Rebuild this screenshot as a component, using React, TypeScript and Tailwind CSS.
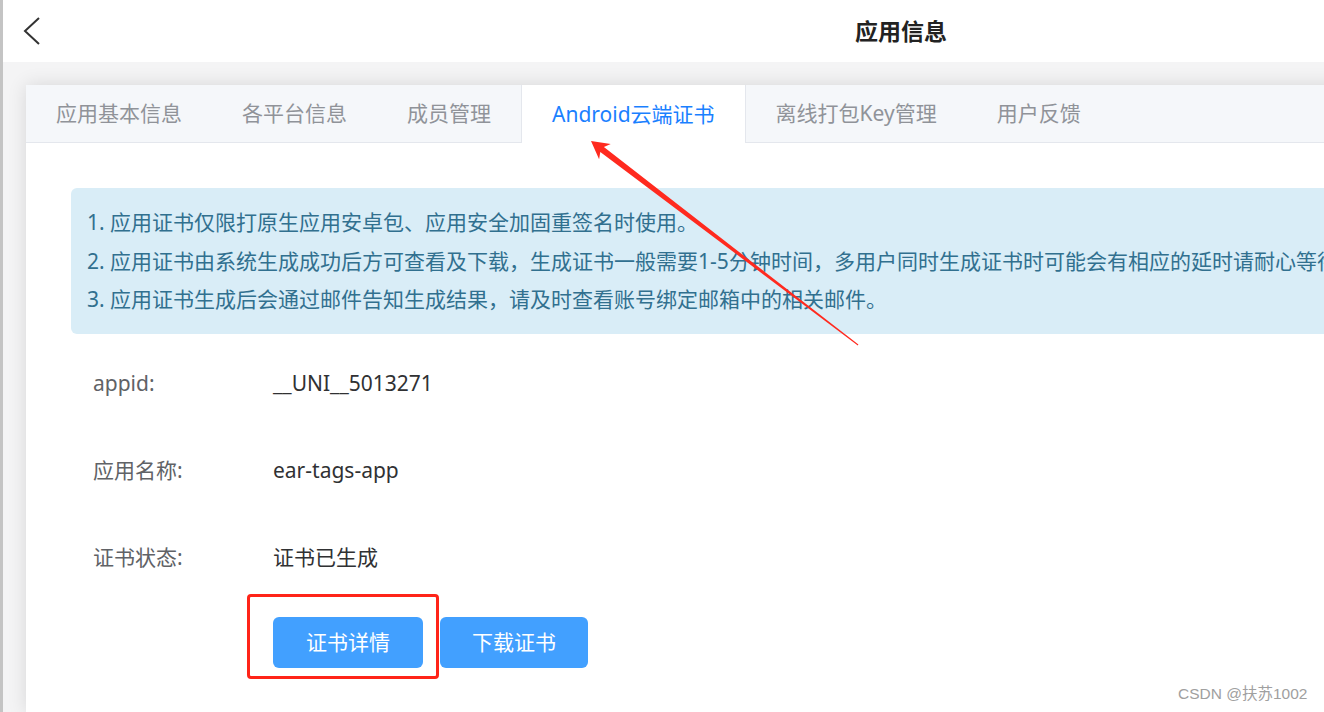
import React from "react";

const font = { fontFamily: '"Noto Sans", "Noto Sans CJK SC", sans-serif' };

export default function App() {
  const tabs = ["应用基本信息", "各平台信息", "成员管理", "Android云端证书", "离线打包Key管理", "用户反馈"];
  return (
    <div className="relative w-[1324px] h-[712px] overflow-hidden bg-[#f4f4f5]" style={font}>
      <div className="flex h-full">
        <div className="w-[3px] bg-[#c4c4c4] shrink-0" />
        <div className="flex-1 flex flex-col min-w-0">
          {/* header */}
          <div className="h-[62px] bg-white flex items-center relative shrink-0">
            <svg className="ml-[20px]" width="20" height="30" viewBox="0 0 20 30">
              <path d="M16 2 L2 15 L16 28" fill="none" stroke="#333" strokeWidth="2" />
            </svg>
            <div className="absolute left-[852px] top-0 h-full flex items-center text-[23px] font-bold text-[#222] leading-none">
              应用信息
            </div>
          </div>
          {/* card */}
          <div className="ml-[23px] mt-[23px] w-[1600px] shrink-0 flex-1 bg-white shadow-[0_0_18px_rgba(0,0,0,0.12)] flex flex-col">
            <div className="h-[58px] bg-[#f5f7fa] border-b border-[#e4e7ed] flex shrink-0">
              {tabs.map((t, i) =>
                i === 3 ? (
                  <div
                    key={t}
                    className="px-[30px] h-[58px] bg-white border-l border-r border-[#e4e7ed] text-[#1a80ff] text-[21px] flex items-center leading-none"
                  >
                    {t}
                  </div>
                ) : (
                  <div key={t} className="px-[30px] h-full text-[#909399] text-[21px] flex items-center leading-none">
                    {t}
                  </div>
                )
              )}
            </div>
            <div className="px-[45px] pt-[45px]">
              <div className="bg-[#d9edf7] rounded-[6px] py-[15px] px-[16px] text-[#31708f] text-[21px] leading-[38.5px] whitespace-nowrap">
                <div>1. 应用证书仅限打原生应用安卓包、应用安全加固重签名时使用。</div>
                <div>2. 应用证书由系统生成成功后方可查看及下载，生成证书一般需要1-5分钟时间，多用户同时生成证书时可能会有相应的延时请耐心等待。</div>
                <div>3. 应用证书生成后会通过邮件告知生成结果，请及时查看账号绑定邮箱中的相关邮件。</div>
              </div>
              <div className="mt-[6px] pl-[22px]">
                {[
                  ["appid:", "__UNI__5013271"],
                  ["应用名称:", "ear-tags-app"],
                  ["证书状态:", "证书已生成"],
                ].map(([k, v]) => (
                  <div key={k} className="h-[87px] flex items-center text-[21px] leading-none">
                    <div className="w-[180px] text-[#606266]">{k}</div>
                    <div className="text-[#303133]">{v}</div>
                  </div>
                ))}
                <div className="mt-[16px] ml-[180px] flex gap-[17px]">
                  <button className="w-[150px] h-[51px] bg-[#42a0ff] rounded-[6px] text-white text-[21px] leading-none">
                    证书详情
                  </button>
                  <button className="w-[148px] h-[51px] bg-[#42a0ff] rounded-[6px] text-white text-[21px] leading-none">
                    下载证书
                  </button>
                </div>
              </div>
            </div>
          </div>
        </div>
      </div>

      {/* annotations */}
      <div className="absolute left-[247px] top-[594px] w-[192px] h-[85px] border-[3px] border-[#ff2418] rounded-[4px]" />
      <svg className="absolute left-0 top-0 pointer-events-none" width="1324" height="712">
        <polygon
          points="591,141 610.7,144 603.9,147.1 858.4,344.6 857.8,345.4 600.3,151.9 599.1,159.2"
          fill="#ff2a1f"
        />
      </svg>
      <div
        className="absolute left-[1178px] top-[686px] text-[15.5px] text-[#a0a0a0] leading-none"
        style={{ fontFamily: '"Liberation Sans", "Noto Sans CJK SC", sans-serif' }}
      >
        CSDN @扶苏1002
      </div>
    </div>
  );
}
